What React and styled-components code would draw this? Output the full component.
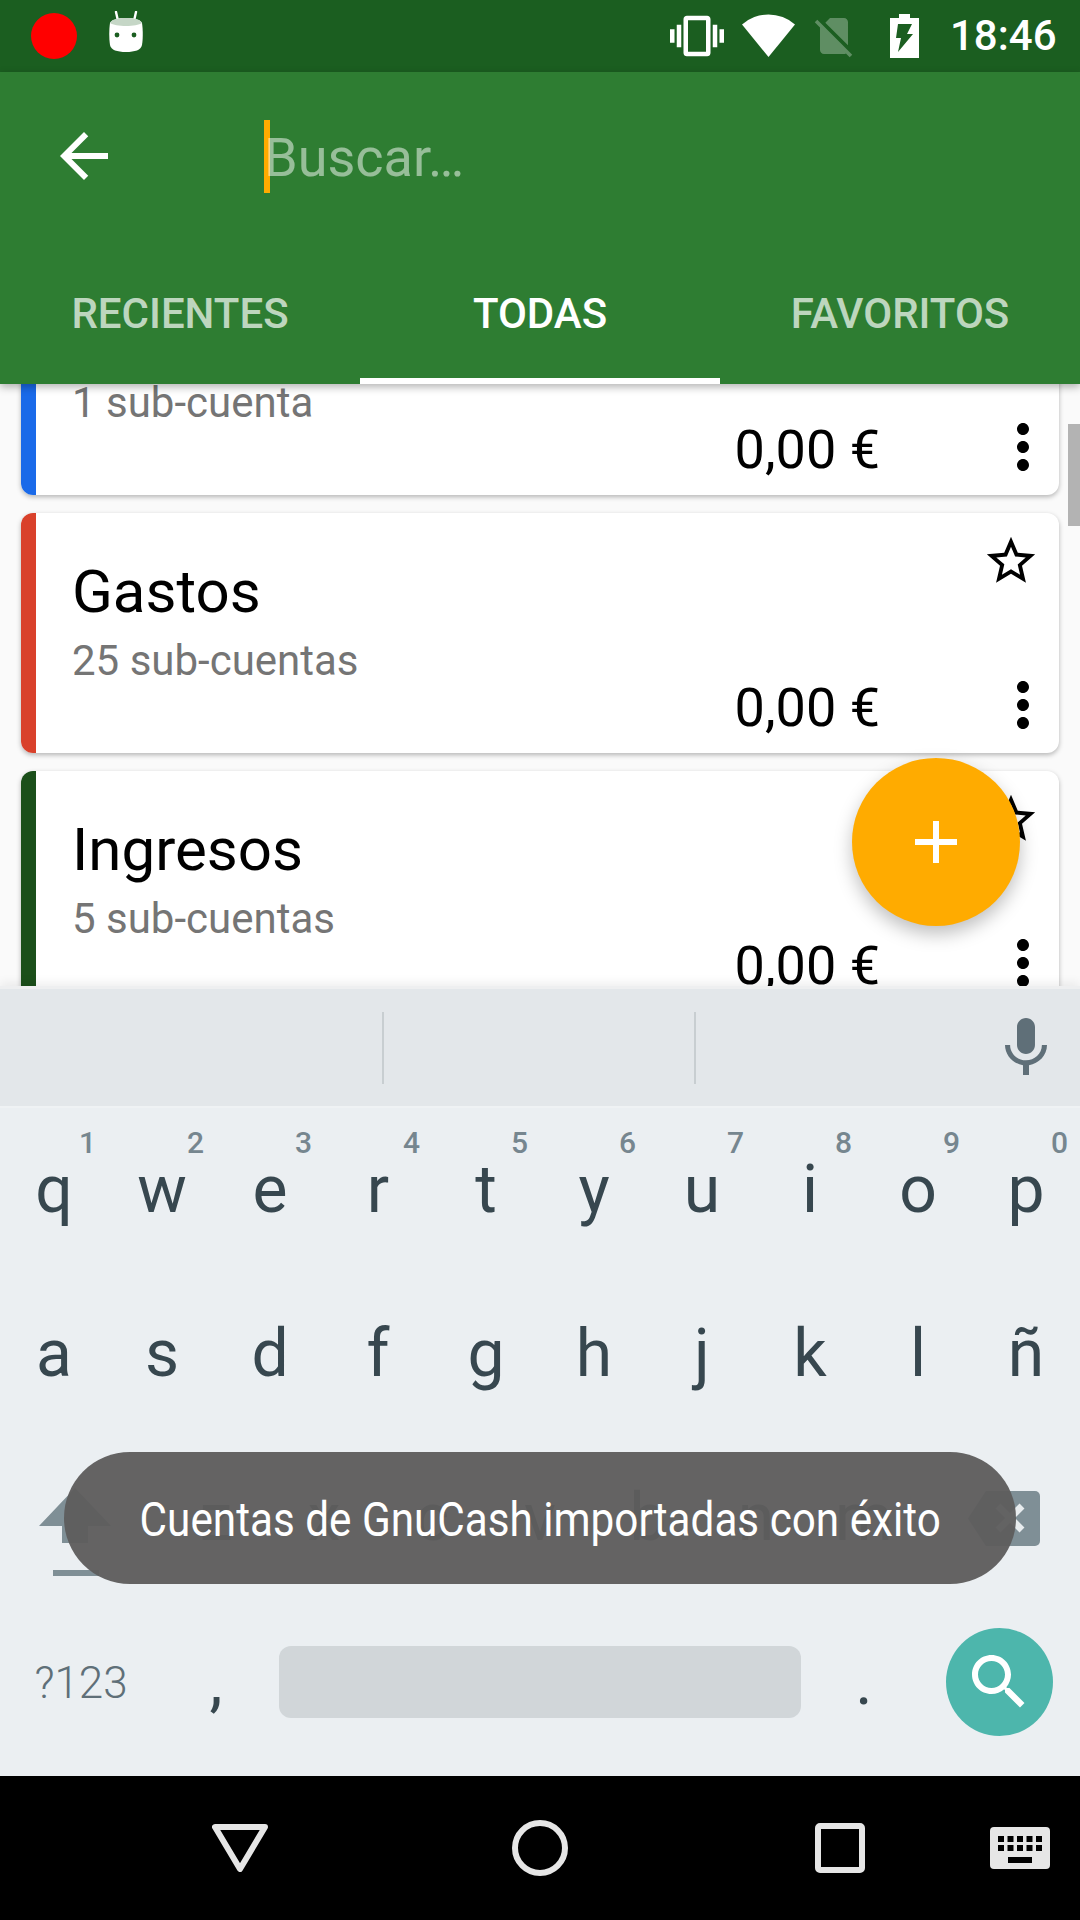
import React from 'react';
import styled, { createGlobalStyle } from 'styled-components';

const Global = createGlobalStyle`
  html, body { margin: 0; padding: 0; background: #000; }
  * { box-sizing: border-box; }
`;

const Screen = styled.div`
  position: relative;
  width: 1080px;
  height: 1920px;
  display: flex;
  flex-direction: column;
  overflow: hidden;
  background: #fafafa;
  font-family: Roboto, "Liberation Sans", sans-serif;
`;

const StatusBar = styled.header`
  flex: 0 0 72px;
  display: flex;
  align-items: center;
  background: #1b5e20;
  padding: 0 26px 0 31px;
`;
const RecDot = styled.span`
  width: 46px;
  height: 46px;
  border-radius: 50%;
  background: #ff0000;
`;
const StatusLeft = styled.div`
  display: flex;
  align-items: center;
  gap: 31px;
  flex: 1;
`;
const StatusRight = styled.div`
  display: flex;
  align-items: center;
`;
const StatusGlyph = styled.svg`
  display: block;
  margin-left: ${p => p.$ml || 0}px;
  fill: ${p => p.$fill || '#fff'};
`;
const MascotIcon = styled.svg`
  display: block;
  margin-top: -8px;
`;
const Clock = styled.span`
  margin-left: 31px;
  color: #fff;
  font-size: 42px;
  line-height: 72px;
  font-weight: 500;
  width: 104px;
  white-space: nowrap;
`;

const AppBar = styled.section`
  position: relative;
  z-index: 2;
  flex: 0 0 312px;
  background: #2e7d32;
  box-shadow: 0 3px 8px rgba(0, 0, 0, 0.3);
`;
const SearchRow = styled.div`
  height: 168px;
  display: flex;
  align-items: center;
  padding-left: 48px;
`;
const BackIcon = styled.svg`
  width: 72px;
  height: 72px;
  fill: #fff;
  margin-right: 144px;
`;
const Caret = styled.span`
  width: 6px;
  height: 73px;
  background: #ffab00;
`;
const SearchHint = styled.span`
  margin-left: -6px;
  padding-top: 3px;
  font-size: 54px;
  color: rgba(255, 255, 255, 0.5);
`;
const Tabs = styled.nav`
  height: 144px;
  display: grid;
  grid-template-columns: repeat(3, 1fr);
`;
const Tab = styled.div`
  display: flex;
  align-items: center;
  justify-content: center;
  font-size: 42px;
  font-weight: 500;
  color: ${p => (p.$active ? '#fff' : 'rgba(255,255,255,0.7)')};
  border-bottom: 6px solid ${p => (p.$active ? '#fff' : 'transparent')};
  padding-top: 8px;
`;

const Content = styled.main`
  position: relative;
  flex: 0 0 602px;
  overflow: hidden;
`;
const CardList = styled.div`
  display: flex;
  flex-direction: column;
  gap: 18px;
  margin-top: -129px;
  padding: 0 21px;
`;
const Card = styled.article`
  flex: 0 0 240px;
  height: 240px;
  display: flex;
  background: #fff;
  border-radius: 12px;
  overflow: hidden;
  box-shadow: 0 2px 5px rgba(0, 0, 0, 0.28);
`;
const ColorBar = styled.div`
  flex: 0 0 15px;
  background: ${p => p.$color};
`;
const Info = styled.div`
  flex: 1;
  padding: 43px 0 0 36px;
`;
const Title = styled.div`
  font-size: 60px;
  line-height: 72px;
  height: 72px;
  color: #000;
`;
const Sub = styled.div`
  margin-top: 9px;
  font-size: 42px;
  line-height: 48px;
  color: #757575;
`;
const Side = styled.div`
  display: flex;
  flex-direction: column;
  align-items: flex-end;
  justify-content: space-between;
`;
const StarIcon = styled.svg`
  width: 58px;
  height: 58px;
  margin: 19px 19px 0 0;
  fill: #000;
`;
const BottomRow = styled.div`
  display: flex;
  align-items: center;
  margin-bottom: 9px;
`;
const Amount = styled.span`
  font-size: 54px;
  line-height: 72px;
  padding-top: 6px;
  color: #000;
  margin-right: 107px;
  white-space: nowrap;
`;
const Kebab = styled.svg`
  width: 72px;
  height: 72px;
  fill: #000;
`;
const Scrollbar = styled.div`
  position: absolute;
  right: 0;
  top: 40px;
  width: 12px;
  height: 102px;
  background: #b3b3b3;
`;
const Fab = styled.button`
  position: absolute;
  left: 852px;
  top: 758px;
  width: 168px;
  height: 168px;
  z-index: 3;
  border: 0;
  padding: 0;
  border-radius: 50%;
  background: #ffab00;
  box-shadow: 0 8px 18px rgba(0, 0, 0, 0.25);
  display: flex;
  align-items: center;
  justify-content: center;
`;

const Keyboard = styled.section`
  position: relative;
  z-index: 1;
  flex: 0 0 790px;
  background: #ebeff2;
  padding-bottom: 12px;
  box-shadow: 0 -3px 10px rgba(0, 0, 0, 0.07);
`;
const Strip = styled.div`
  height: 122px;
  display: flex;
  align-items: center;
  background: #e3e7ea;
  border-top: 3px solid #eeeff0;
  border-bottom: 2px solid #eff2f4;
`;
const Slot = styled.div`
  width: ${p => p.$w}px;
  height: 72px;
  border-right: 2px solid #c8ced1;
`;
const Mic = styled.svg`
  width: 72px;
  height: 72px;
  margin-left: auto;
  margin-right: 18px;
  fill: #5f6f78;
`;
const KeyRow = styled.div`
  height: 164px;
  display: flex;
`;
const Key = styled.div`
  position: relative;
  flex: 0 0 ${p => p.$w || 108}px;
  display: flex;
  align-items: center;
  justify-content: center;
  font-size: 66px;
  line-height: 164px;
  color: #37474f;
`;
const Hint = styled.span`
  position: absolute;
  top: 17px;
  right: 12px;
  font-size: 30px;
  line-height: 36px;
  font-weight: 500;
  color: #76868f;
`;
const SymbolKey = styled(Key)`
  font-size: 44px;
  color: #5f6f78;
  font-weight: 300;
  padding-top: 2px;
`;
const SpaceKey = styled(Key)`
  padding: 0 9px;
`;
const SpaceBar = styled.div`
  width: 100%;
  height: 72px;
  background: #d1d6d9;
  border-radius: 12px;
`;
const IconKey = styled(Key)`
  padding: ${p => p.$pad || '0'};
  align-items: ${p => p.$align || 'center'};
`;
const ActionButton = styled.div`
  width: 107px;
  height: 108px;
  border-radius: 50%;
  background: #4db6ac;
  display: flex;
  align-items: center;
  justify-content: center;
`;
const SearchGlyph = styled.svg`
  width: 72px;
  height: 72px;
  fill: #fff;
`;
const Toast = styled.div`
  position: absolute;
  left: 64px;
  top: 1452px;
  z-index: 4;
  width: 952px;
  height: 132px;
  border-radius: 66px;
  background: rgba(94, 93, 93, 0.96);
  display: flex;
  align-items: center;
  justify-content: center;
`;
const ToastText = styled.span`
  display: block;
  padding-top: 2px;
  color: #fff;
  font-size: 48px;
  white-space: nowrap;
  transform: scaleX(0.88);
`;

const NavBar = styled.footer`
  flex: 0 0 144px;
  background: #000;
  display: grid;
  grid-template-columns: 300px 300px 300px 60px;
  align-items: center;
  justify-items: center;
  padding-left: 90px;
`;

const ROW1 = ['q', 'w', 'e', 'r', 't', 'y', 'u', 'i', 'o', 'p'];
const HINTS = ['1', '2', '3', '4', '5', '6', '7', '8', '9', '0'];
const ROW2 = ['a', 's', 'd', 'f', 'g', 'h', 'j', 'k', 'l', 'ñ'];
const ROW3 = ['z', 'x', 'c', 'v', 'b', 'n', 'm'];

const STAR = 'M22 9.24l-7.19-.62L12 2 9.19 8.63 2 9.24l5.46 4.73L5.82 21 12 17.27 18.18 21l-1.63-7.03L22 9.24zM12 15.4l-3.76 2.27 1-4.28-3.32-2.88 4.38-.38L12 6.1l1.71 4.04 4.38.38-3.32 2.88 1 4.28L12 15.4z';
const MORE = 'M12 8c1.1 0 2-.9 2-2s-.9-2-2-2-2 .9-2 2 .9 2 2 2zm0 2c-1.1 0-2 .9-2 2s.9 2 2 2 2-.9 2-2-.9-2-2-2zm0 6c-1.1 0-2 .9-2 2s.9 2 2 2 2-.9 2-2-.9-2-2-2z';

const AccountCard = ({ color, title, sub }) => (
  <Card>
    <ColorBar $color={color} />
    <Info>
      <Title>{title}</Title>
      <Sub>{sub}</Sub>
    </Info>
    <Side>
      <StarIcon viewBox="0 0 24 24"><path d={STAR} /></StarIcon>
      <BottomRow>
        <Amount>0,00 €</Amount>
        <Kebab viewBox="0 0 24 24"><path d={MORE} /></Kebab>
      </BottomRow>
    </Side>
  </Card>
);

export default function App() {
  return (
    <Screen>
      <Global />
      <StatusBar>
        <StatusLeft>
          <RecDot />
          <MascotIcon width="36" height="42" viewBox="0 0 36 42">
            <path d="M8 1l2 9M28 1l-2 9" stroke="#fff" strokeWidth="2.4" strokeLinecap="round" fill="none" />
            <path d="M18 7c9 0 15 2 16 5 1 6 1 16 0 22-1 5-7 7-16 7S3 39 2 34C1 28 1 18 2 12 3 9 9 7 18 7z" fill="#fff" />
            <path d="M18 7c9 0 15 2 16 5-3 2-9 3-16 3S5 14 2 12C3 9 9 7 18 7z" fill="#c5d6c6" />
            <circle cx="9" cy="24" r="2.4" fill="#1b5e20" />
            <circle cx="26" cy="24" r="2.4" fill="#1b5e20" />
          </MascotIcon>
        </StatusLeft>
        <StatusRight>
          <StatusGlyph width="54" height="54" viewBox="0 0 24 24">
            <path d="M0 15h2V9H0v6zm3 2h2V7H3v10zm19-8v6h2V9h-2zm-3 8h2V7h-2v10zM16.5 3h-9C6.67 3 6 3.67 6 4.5v15c0 .83.67 1.5 1.5 1.5h9c.83 0 1.5-.67 1.5-1.5v-15c0-.83-.67-1.5-1.5-1.5zM16 19H8V5h8v14z" />
          </StatusGlyph>
          <StatusGlyph $ml={18} width="53" height="44" viewBox="0 0 53 44">
            <path d="M0 10.5A40 40 0 0 1 53 10.5L26.5 43z" />
          </StatusGlyph>
          <StatusGlyph $ml={15} $fill="rgba(255,255,255,0.3)" width="48" height="48" viewBox="0 0 24 24">
            <path d="M18.99 5c0-1.1-.89-2-1.99-2h-7L7.66 5.34 19 16.68 18.99 5zM3.65 3.88L2.38 5.15 5 7.77V19c0 1.1.9 2 2 2h10.01c.35 0 .67-.1.96-.26l1.88 1.88 1.27-1.27L3.65 3.88z" />
          </StatusGlyph>
          <StatusGlyph $ml={32} width="29" height="44" viewBox="0 0 29 44">
            <path fillRule="evenodd" d="M9 0h11v4h9v40H0V4h9zM8 10l-2 14h5l-3 14 15-18h-6l5-10z" />
          </StatusGlyph>
          <Clock>18:46</Clock>
        </StatusRight>
      </StatusBar>

      <AppBar>
        <SearchRow>
          <BackIcon viewBox="0 0 24 24">
            <path d="M20 11H7.83l5.59-5.59L12 4l-8 8 8 8 1.41-1.41L7.83 13H20v-2z" />
          </BackIcon>
          <Caret />
          <SearchHint>Buscar…</SearchHint>
        </SearchRow>
        <Tabs>
          <Tab>RECIENTES</Tab>
          <Tab $active>TODAS</Tab>
          <Tab>FAVORITOS</Tab>
        </Tabs>
      </AppBar>

      <Content>
        <CardList>
          <AccountCard color="#1a6ae9" sub="1 sub-cuenta" />
          <AccountCard color="#d9412b" title="Gastos" sub="25 sub-cuentas" />
          <AccountCard color="#1b4f1a" title="Ingresos" sub="5 sub-cuentas" />
        </CardList>
        <Scrollbar />
      </Content>

      <Keyboard>
        <Strip>
          <Slot $w={384} />
          <Slot $w={312} />
          <Mic viewBox="0 0 24 24">
            <path d="M12 14c1.66 0 2.99-1.34 2.99-3L15 5c0-1.66-1.34-3-3-3S9 3.34 9 5v6c0 1.66 1.34 3 3 3zm5.3-3c0 3-2.54 5.1-5.3 5.1S6.7 14 6.7 11H5c0 3.41 2.72 6.23 6 6.72V21h2v-3.28c3.28-.48 6-3.3 6-6.72h-1.7z" />
          </Mic>
        </Strip>
        <KeyRow>
          {ROW1.map((k, i) => (
            <Key key={k}>{k}<Hint>{HINTS[i]}</Hint></Key>
          ))}
        </KeyRow>
        <KeyRow>
          {ROW2.map(k => <Key key={k}>{k}</Key>)}
        </KeyRow>
        <KeyRow>
          <IconKey $w={162} $pad="52px 12px 0 0" $align="flex-start">
            <svg width="72" height="88" viewBox="0 0 72 88" fill="#7f8f96">
              <path d="M36 0L72 38H49V55H23V38H0z" />
              <rect x="14" y="82" width="46" height="6" />
            </svg>
          </IconKey>
          {ROW3.map(k => <Key key={k}>{k}</Key>)}
          <IconKey $w={162} $pad="0 0 0 10px">
            <svg width="72" height="55" viewBox="0 0 72 55">
              <path d="M18 0H67a5 5 0 0 1 5 5V50a5 5 0 0 1-5 5H18L0 27.5z" fill="#7f8f96" />
              <path d="M30 15l24 24M54 15L30 39" stroke="#e8ecee" strokeWidth="7" fill="none" />
            </svg>
          </IconKey>
        </KeyRow>
        <KeyRow>
          <SymbolKey $w={162}>?123</SymbolKey>
          <Key>,</Key>
          <SpaceKey $w={540}><SpaceBar /></SpaceKey>
          <Key>.</Key>
          <IconKey $w={162}>
            <ActionButton>
              <SearchGlyph viewBox="0 0 24 24">
                <path d="M15.5 14h-.79l-.28-.27C15.41 12.59 16 11.11 16 9.5 16 5.91 13.09 3 9.5 3S3 5.91 3 9.5 5.91 16 9.5 16c1.61 0 3.09-.59 4.23-1.57l.27.28v.79l5 4.99L20.49 19l-4.99-5zm-6 0C7.01 14 5 11.99 5 9.5S7.01 5 9.5 5 14 7.01 14 9.5 11.99 14 9.5 14z" />
              </SearchGlyph>
            </ActionButton>
          </IconKey>
        </KeyRow>
      </Keyboard>

      <NavBar>
        <svg width="56" height="48" viewBox="0 0 56 48" fill="none" stroke="#e6e6e6" strokeWidth="6" strokeLinejoin="round">
          <path d="M3 3h50L28 45z" />
        </svg>
        <svg width="56" height="56" viewBox="0 0 56 56" fill="none" stroke="#e6e6e6" strokeWidth="6">
          <circle cx="28" cy="28" r="25" />
        </svg>
        <svg width="50" height="50" viewBox="0 0 50 50" fill="none" stroke="#e6e6e6" strokeWidth="6" strokeLinejoin="round">
          <rect x="3" y="3" width="44" height="44" rx="2" />
        </svg>
        <svg width="60" height="42" viewBox="0 0 60 42">
          <rect width="60" height="42" rx="4" fill="#e6e6e6" />
          <path d="M8 9h6v6H8zM17.5 9h6v6h-6zM27 9h6v6h-6zM36.5 9h6v6h-6zM46 9h6v6h-6zM8 18h6v6H8zM17.5 18h6v6h-6zM27 18h6v6h-6zM36.5 18h6v6h-6zM46 18h6v6h-6zM18 30h24v6H18z" fill="#000" />
        </svg>
      </NavBar>

      <Fab aria-label="Añadir">
        <svg width="42" height="42" viewBox="0 0 42 42" fill="#fff">
          <path d="M18 0h6v18h18v6H24v18h-6V24H0v-6h18z" />
        </svg>
      </Fab>
      <Toast><ToastText>Cuentas de GnuCash importadas con éxito</ToastText></Toast>
    </Screen>
  );
}
